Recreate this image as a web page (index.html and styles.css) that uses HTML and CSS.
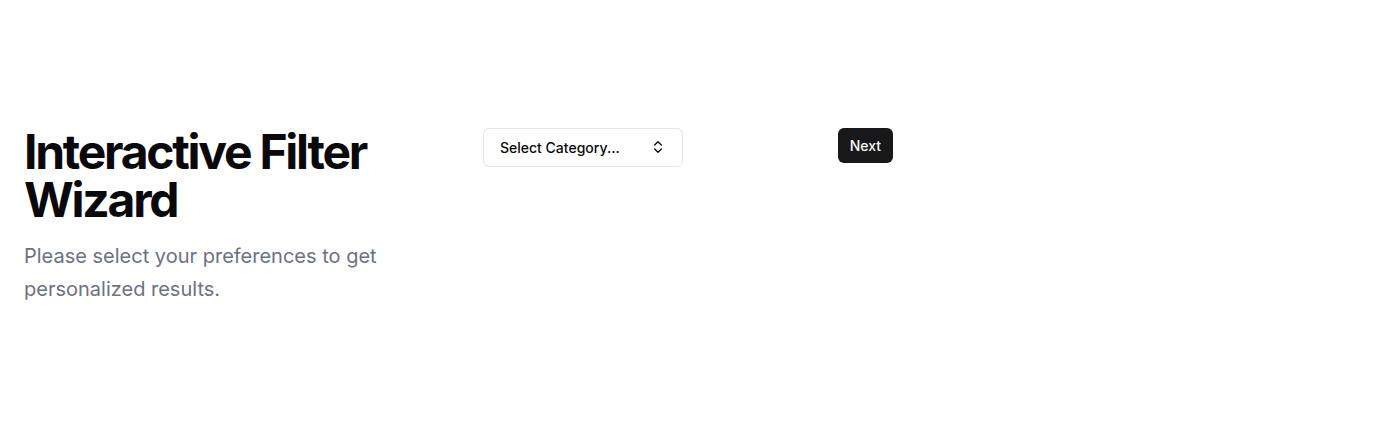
FILE: index.html
```html
<!DOCTYPE html>
<html lang="en">
<head>
<meta charset="utf-8">
<title>Interactive Filter Wizard</title>
<link rel="stylesheet" href="styles.css">
</head>
<body>
<main class="page">
  <section class="wizard">
    <div class="intro">
      <h1 class="title">Interactive Filter Wizard</h1>
      <p class="lead">Please select your preferences to get personalized results.</p>
    </div>
    <div class="controls">
      <button class="select" type="button">
        <span>Select Category...</span>
        <svg class="chev" width="16" height="16" viewBox="0 0 24 24" fill="none" stroke="currentColor" stroke-width="2" stroke-linecap="round" stroke-linejoin="round"><path d="m7 15 5 5 5-5"/><path d="m7 9 5-5 5 5"/></svg>
      </button>
      <button class="next" type="button">Next</button>
    </div>
  </section>
</main>
</body>
</html>
```

FILE: styles.css
```css
* { box-sizing: border-box; }
html, body { margin: 0; padding: 0; background: #ffffff; }
body { font-family: Inter, "Noto Sans", sans-serif; color: #09090b; }
.page {
  min-height: 433px;
  display: flex;
  align-items: center;
  padding: 0 24px;
}
.wizard {
  display: flex;
  align-items: flex-start;
  gap: 24px;
}
.intro { width: 435px; }
.title {
  margin: 0 0 16px;
  font-size: 48px;
  line-height: 48px;
  font-weight: 700;
  letter-spacing: -0.047em;
  color: #09090b;
}
.lead {
  margin: 0;
  font-size: 20px;
  line-height: 33px;
  color: #6b7280;
}
.controls {
  width: 410px;
  display: flex;
  justify-content: space-between;
  align-items: flex-start;
}
.select {
  width: 200px;
  height: 39px;
  display: flex;
  align-items: center;
  justify-content: space-between;
  padding: 0 16px;
  border: 1px solid #e4e4e7;
  border-radius: 6px;
  background: #fff;
  font-family: inherit;
  font-size: 14px;
  font-weight: 500;
  color: #09090b;
  cursor: pointer;
}
.chev { width: 16px; height: 16px; }
.next {
  height: 35px;
  padding: 0 12px;
  border: none;
  border-radius: 6px;
  background: #18181b;
  color: #fafafa;
  font-family: inherit;
  font-size: 14px;
  font-weight: 500;
  cursor: pointer;
}
```
